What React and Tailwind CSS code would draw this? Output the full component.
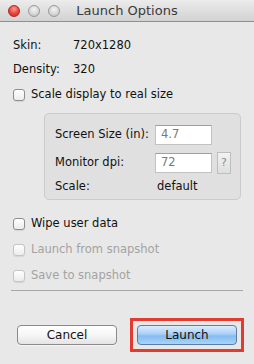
import React from "react";

const font = { fontFamily: '"DejaVu Sans", "Liberation Sans", sans-serif' };

function Check({ label, disabled }) {
  return (
    <div className="flex items-center h-[16px]">
      <div
        className={
          "w-[12px] h-[12px] rounded-[3px] border bg-gradient-to-b from-white to-[#ececec] shadow-[0_1px_1px_rgba(0,0,0,0.08)] " +
          (disabled ? "border-[#c4c4c4]" : "border-[#8e8e8e]")
        }
      />
      <span className={"ml-[6px] whitespace-nowrap text-[11.5px] " + (disabled ? "text-[#a3a3a3]" : "text-[#111]")}>{label}</span>
    </div>
  );
}

function Light({ red }) {
  return (
    <div
      className={
        "w-[12px] h-[12px] rounded-full border " +
        (red
          ? "border-[#b3261e] bg-[radial-gradient(circle_at_50%_30%,#ff9c93_0%,#e8453c_55%,#c32b22_100%)]"
          : "border-[#9a9a9a] bg-[radial-gradient(circle_at_50%_35%,#f4f4f4_0%,#d4d4d4_60%,#b8b8b8_100%)]")
      }
    />
  );
}

export default function App() {
  return (
    <div className="w-[254px] h-[364px] bg-[#e8e8e8] overflow-hidden text-[#111]" style={font}>
      <div className="relative h-[22px] bg-gradient-to-b from-[#ececec] to-[#d2d2d2] border-b border-[#8f8f8f] flex items-center">
        <div className="flex items-center gap-[8px] pl-[8px]">
          <Light red />
          <Light />
          <Light />
        </div>
        <div className="absolute inset-0 flex items-center justify-center text-[13px] text-[#3a3a3a]">Launch Options</div>
      </div>

      <div className="pt-[16px] pl-[13px] text-[11.5px]">
        <div className="flex h-[16px] items-center">
          <span className="w-[60px]">Skin:</span>
          <span>720x1280</span>
        </div>
        <div className="flex h-[16px] items-center mt-[8px]">
          <span className="w-[60px]">Density:</span>
          <span>320</span>
        </div>
        <div className="mt-[9px]">
          <Check label="Scale display to real size" />
        </div>
      </div>

      <div className="ml-[44px] mt-[10px] w-[197px] rounded-[5px] border border-[#cbcbcb] bg-[#e0e0e0] pt-[11px] pb-[4px] pl-[10px] text-[11.5px] whitespace-nowrap">
        <div className="flex items-center h-[20px]">
          <span className="w-[100px]">Screen Size (in):</span>
          <div className="w-[57px] h-[20px] bg-white border border-[#c2c2c2] border-t-[#9f9f9f] flex items-center pl-[5px] text-[#7a7a7a]">4.7</div>
        </div>
        <div className="flex items-center h-[20px] mt-[8px]">
          <span className="w-[100px]">Monitor dpi:</span>
          <div className="w-[57px] h-[20px] bg-white border border-[#c2c2c2] border-t-[#9f9f9f] flex items-center pl-[5px] text-[#7a7a7a]">72</div>
          <div className="ml-[5px] w-[14px] h-[22px] border border-[#bdbdbd] bg-gradient-to-b from-[#f2f2f2] to-[#dedede] flex items-center justify-center text-[11px] text-[#8a8a8a]">?</div>
        </div>
        <div className="flex items-center h-[16px] mt-[6px]">
          <span className="w-[102px]">Scale:</span>
          <span>default</span>
        </div>
      </div>

      <div className="pl-[13px] mt-[16px] flex flex-col gap-[10px]">
        <Check label="Wipe user data" />
        <Check label="Launch from snapshot" disabled />
        <Check label="Save to snapshot" disabled />
      </div>

      <div className="mx-[11px] mt-[6px] h-px bg-[#a8a8a8]" />

      <div className="flex items-center pl-[17px] mt-[27px]">
        <button className="w-[100px] h-[20px] rounded-[4px] border border-[#8a8a8a] bg-gradient-to-b from-white via-[#f6f6f6] to-[#e4e4e4] shadow-[0_1px_0_rgba(255,255,255,0.6)] text-[12px] text-[#111] flex items-center justify-center">
          Cancel
        </button>
        <div className="ml-[13px] border-[3px] border-[#e33b30] p-[4px]">
          <button className="w-[100px] h-[20px] rounded-[4px] border border-[#5a7ea8] bg-[linear-gradient(to_bottom,#dcedfd_0%,#a9d0f7_45%,#86bbf1_55%,#a7d4fb_100%)] text-[12px] text-[#111] flex items-center justify-center">
            Launch
          </button>
        </div>
      </div>
    </div>
  );
}
